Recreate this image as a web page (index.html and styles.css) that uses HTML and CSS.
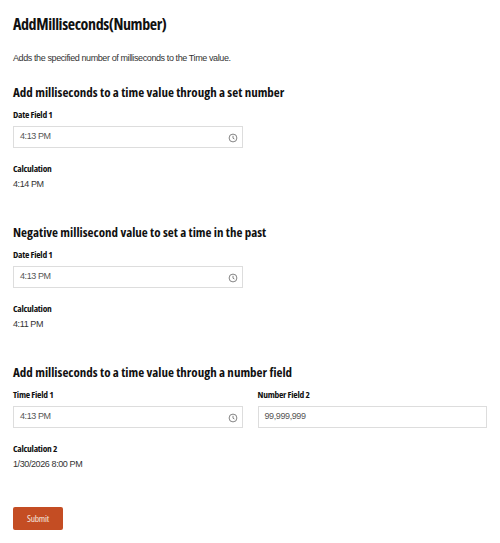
FILE: index.html
```html
<!DOCTYPE html>
<html lang="en">
<head>
	<meta charset="UTF-8" />
	<meta name="viewport" content="width=device-width, initial-scale=1" />
	<title>AddMilliseconds(Number)</title>
	<link rel="stylesheet" href="styles.css">
</head>
<body>
	<div class="form">
		<h1>AddMilliseconds(Number)</h1>
		<p class="desc">Adds the specified number of milliseconds to the Time value.</p>

		<section class="group">
			<h2>Add milliseconds to a time value through a set number</h2>
			<div class="row">
				<div class="field">
					<label>Date Field 1</label>
					<div class="input">
						<span>4:13 PM</span>
						<svg class="clock" viewBox="0 0 10 10"><circle cx="5" cy="5" r="3.9"/><path d="M5 2.8V5.2L6.4 6"/></svg>
					</div>
				</div>
			</div>
			<div class="calc">
				<label>Calculation</label>
				<div class="value">4:14 PM</div>
			</div>
		</section>

		<section class="group">
			<h2>Negative millisecond value to set a time in the past</h2>
			<div class="row">
				<div class="field">
					<label>Date Field 1</label>
					<div class="input">
						<span>4:13 PM</span>
						<svg class="clock" viewBox="0 0 10 10"><circle cx="5" cy="5" r="3.9"/><path d="M5 2.8V5.2L6.4 6"/></svg>
					</div>
				</div>
			</div>
			<div class="calc">
				<label>Calculation</label>
				<div class="value">4:11 PM</div>
			</div>
		</section>

		<section class="group">
			<h2>Add milliseconds to a time value through a number field</h2>
			<div class="row">
				<div class="field">
					<label>Time Field 1</label>
					<div class="input">
						<span>4:13 PM</span>
						<svg class="clock" viewBox="0 0 10 10"><circle cx="5" cy="5" r="3.9"/><path d="M5 2.8V5.2L6.4 6"/></svg>
					</div>
				</div>
				<div class="field">
					<label>Number Field 2</label>
					<div class="input">
						<span>99,999,999</span>
					</div>
				</div>
			</div>
			<div class="calc">
				<label>Calculation 2</label>
				<div class="value">1/30/2026 8:00 PM</div>
			</div>
		</section>

		<button class="submit">Submit</button>
	</div>
</body>
</html>
```

FILE: styles.css
```css
body{
	margin: 0;
	background: #fff;
	color: #222;
	font-family: "Liberation Sans", Arial, sans-serif;
	font-size: 9px;
}

.form{
	padding: 13px 13px 0 13px;
}

h1, h2, label, .submit{
	font-family: "Open Sans", sans-serif;
	font-stretch: 75%;
}

h1{
	margin: 0;
	font-size: 16px;
	line-height: 22px;
	font-weight: 700;
	letter-spacing: -0.4px;
	color: #111;
}

.desc{
	margin: 17px 0 0;
	line-height: 12px;
	letter-spacing: -0.4px;
	color: #333;
}

.group{
	margin-bottom: 32px;
}

.desc + .group{
	margin-top: 19px;
}

h2{
	margin: 0;
	font-size: 13px;
	line-height: 18px;
	font-weight: 700;
	color: #111;
}

.row{
	display: flex;
	gap: 15px;
	margin-top: 7px;
}

.field{
	width: 230px;
}

label{
	display: block;
	font-size: 9.5px;
	line-height: 13px;
	font-weight: 700;
	letter-spacing: -0.25px;
	color: #111;
}

.input{
	display: flex;
	justify-content: space-between;
	align-items: center;
	box-sizing: border-box;
	height: 22px;
	margin-top: 5px;
	padding: 0 4px 0 6px;
	border: 1px solid #ddd;
	color: #555;
	letter-spacing: -0.4px;
}

.input span{
	padding-bottom: 3px;
}

.clock{
	width: 10px;
	height: 10px;
	margin-top: 1px;
	fill: none;
	stroke: #666;
	stroke-width: 0.8;
}

.calc{
	margin-top: 14px;
}

.value{
	margin-top: 2px;
	line-height: 14px;
	letter-spacing: -0.4px;
	color: #333;
}

.submit{
	display: block;
	width: 50px;
	height: 23px;
	margin-top: 36px;
	padding: 0;
	border: 0;
	border-radius: 2px;
	background: #c44d23;
	color: #f5e6df;
	font-size: 9.5px;
	letter-spacing: -0.2px;
}
```
